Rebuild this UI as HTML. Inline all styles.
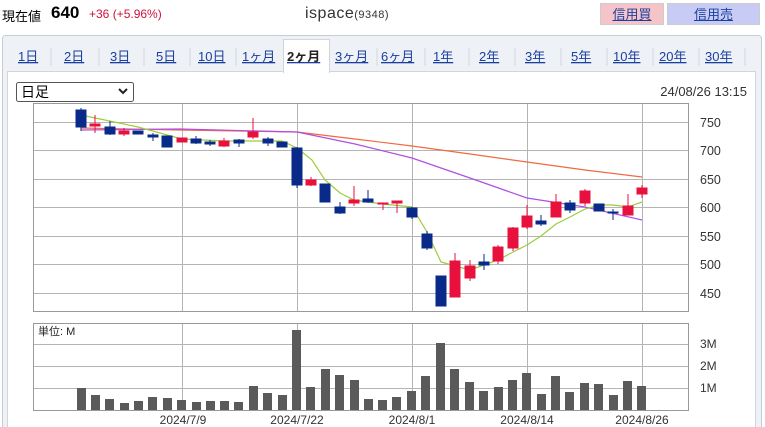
<!DOCTYPE html>
<html><head><meta charset="utf-8"><style>
body{margin:0;width:765px;height:427px;overflow:hidden;background:#fff;font-family:"Liberation Sans","Noto Sans CJK JP",sans-serif;position:relative}
.a{position:absolute;white-space:nowrap}
.btn{position:absolute;top:3px;height:22px;line-height:22px;text-align:center;font-size:13px;color:#1a3fa0;text-decoration:underline;box-sizing:border-box;border:1px solid #ccc}
.tab{position:absolute;top:46px;font-size:13px;color:#1a3fa0;text-decoration:underline}
</style></head><body>
<div class="a" style="left:2px;top:6px;font-size:13px">現在値</div>
<div class="a" style="left:51px;top:3px;font-size:17px;font-weight:bold">640</div>
<div class="a" style="left:89px;top:7px;font-size:12px;color:#d0103a">+36 (+5.96%)</div>
<div class="a" style="left:305px;top:5px;font-size:16px;color:#333;letter-spacing:0.5px">ispace<span style="font-size:11px">(9348)</span></div>
<div class="btn" style="left:600px;width:64px;background:#f5c4c8">信用買</div>
<div class="btn" style="left:667px;width:93px;background:#c8ccf5">信用売</div>
<svg class="a" style="left:0;top:0" width="765" height="427" xmlns="http://www.w3.org/2000/svg" font-family="Liberation Sans, Noto Sans CJK JP, sans-serif">
<rect x="2.5" y="35.5" width="759" height="400" rx="3" fill="#eef1f6" stroke="#c8ccd4"/>
<rect x="7.5" y="71.5" width="748" height="360" fill="#fff" stroke="#d0d4dc"/>
<rect x="283.5" y="39.5" width="46" height="33" fill="#fff" stroke="#d0d4dc"/>
<rect x="284" y="70" width="45" height="4" fill="#fff"/>
<g stroke="#d4d8e0"><line x1="51" y1="48" x2="51" y2="66"/><line x1="99" y1="48" x2="99" y2="66"/><line x1="144" y1="48" x2="144" y2="66"/><line x1="190" y1="48" x2="190" y2="66"/><line x1="236" y1="48" x2="236" y2="66"/><line x1="377" y1="48" x2="377" y2="66"/><line x1="425" y1="48" x2="425" y2="66"/><line x1="469" y1="48" x2="469" y2="66"/><line x1="515" y1="48" x2="515" y2="66"/><line x1="561" y1="48" x2="561" y2="66"/><line x1="607" y1="48" x2="607" y2="66"/><line x1="653" y1="48" x2="653" y2="66"/><line x1="699" y1="48" x2="699" y2="66"/><line x1="745" y1="48" x2="745" y2="66"/></g>
<g font-size="13" fill="#1a3fa0" text-decoration="underline">
<text x="18" y="61">1日</text><text x="64" y="61">2日</text><text x="110" y="61">3日</text><text x="156" y="61">5日</text><text x="198" y="61">10日</text><text x="242" y="61">1ヶ月</text><text x="287" y="61" fill="#222" font-weight="bold" text-decoration="none">2ヶ月</text><text x="335" y="61">3ヶ月</text><text x="381" y="61">6ヶ月</text><text x="433" y="61">1年</text><text x="479" y="61">2年</text><text x="525" y="61">3年</text><text x="571" y="61">5年</text><text x="613" y="61">10年</text><text x="659" y="61">20年</text><text x="705" y="61">30年</text></g>
<rect x="16.5" y="82.5" width="117" height="19" rx="2" fill="#fff" stroke="#555"/>
<text x="21" y="97" font-size="14">日足</text>
<path d="M119 89l4 4 4-4" stroke="#222" stroke-width="2" fill="none"/>
<text x="747" y="96" font-size="13" fill="#333" text-anchor="end">24/08/26 13:15</text>
<!-- price chart -->
<g stroke="#b4b4b4" stroke-width="1">
<line x1="33" y1="122.5" x2="688" y2="122.5"/><line x1="33" y1="150.5" x2="688" y2="150.5"/><line x1="33" y1="179.5" x2="688" y2="179.5"/><line x1="33" y1="207.5" x2="688" y2="207.5"/><line x1="33" y1="236.5" x2="688" y2="236.5"/><line x1="33" y1="264.5" x2="688" y2="264.5"/><line x1="33" y1="293.5" x2="688" y2="293.5"/>
<line x1="182.5" y1="103" x2="182.5" y2="311"/><line x1="297.5" y1="103" x2="297.5" y2="311"/><line x1="412.5" y1="103" x2="412.5" y2="311"/><line x1="527.5" y1="103" x2="527.5" y2="311"/><line x1="642.5" y1="103" x2="642.5" y2="311"/>
</g>
<rect x="33.5" y="103.5" width="655" height="208" fill="none" stroke="#999"/>
<g font-size="12.5" fill="#333"><text x="700" y="127">750</text><text x="700" y="155">700</text><text x="700" y="184">650</text><text x="700" y="212">600</text><text x="700" y="241">550</text><text x="700" y="269">500</text><text x="700" y="298">450</text></g>
<g fill="none" stroke-width="1.2">
<polyline stroke="#f06a40" points="81,128 180,130 297,132 355,139 412,146 470,154 527,162 585,170 642,177"/>
<polyline stroke="#b050e0" points="81,130 180,129 297,132 355,144 412,158 470,178 527,198 585,207 642,220"/>
<polyline stroke="#9ccc3c" points="81,115 138,127 182,139 224,141 253,141 282,141 297,148 312,160 325,180 340,193 354,200 383,204 412,207 427,232 441,262 455,266 470,270 484,265 498,260 513,252 527,245 541,236 556,224 570,217 585,209 599,205 613,205 628,207 642,202"/>
</g>
<g stroke-width="1">
<!-- x, top, bottom, wickTop, wickBottom, color -->
<g stroke="#0a2a8a" fill="#0a2a8a">
<line x1="81" y1="108" x2="81" y2="131"/><rect x="76" y="110" width="10" height="17"/>
<line x1="110" y1="121" x2="110" y2="135"/><rect x="105" y="127" width="10" height="7"/>
<rect x="133" y="131" width="10" height="3"/>
<line x1="153" y1="133" x2="153" y2="141"/><rect x="148" y="135" width="10" height="2"/>
<rect x="162" y="136" width="10" height="11"/>
<line x1="196" y1="136" x2="196" y2="144"/><rect x="191" y="139" width="10" height="4"/>
<line x1="210" y1="140" x2="210" y2="146"/><rect x="205" y="142" width="10" height="2"/>
<line x1="239" y1="139" x2="239" y2="147"/><rect x="234" y="140" width="10" height="3"/>
<line x1="268" y1="137" x2="268" y2="146"/><rect x="263" y="139" width="10" height="4"/>
<rect x="277" y="142" width="10" height="5"/>
<line x1="297" y1="147" x2="297" y2="188"/><rect x="292" y="148" width="10" height="37"/>
<rect x="320" y="184" width="10" height="18"/>
<line x1="340" y1="202" x2="340" y2="214"/><rect x="335" y="207" width="10" height="6"/>
<line x1="368" y1="190" x2="368" y2="203"/><rect x="363" y="199" width="10" height="3"/>
<line x1="412" y1="207" x2="412" y2="219"/><rect x="407" y="208" width="10" height="9"/>
<line x1="427" y1="231" x2="427" y2="250"/><rect x="422" y="234" width="10" height="14"/>
<rect x="436" y="276" width="10" height="30"/>
<line x1="484" y1="254" x2="484" y2="270"/><rect x="479" y="262" width="10" height="3"/>
<line x1="541" y1="215" x2="541" y2="226"/><rect x="536" y="221" width="10" height="3"/>
<line x1="570" y1="200" x2="570" y2="213"/><rect x="565" y="203" width="10" height="7"/>
<rect x="594" y="204" width="10" height="7"/>
<line x1="613" y1="209" x2="613" y2="220"/><rect x="608" y="212" width="10" height="1"/>
</g>
<g stroke="#e8103c" fill="#e8103c">
<line x1="95" y1="115" x2="95" y2="133"/><rect x="90" y="124" width="10" height="2"/>
<line x1="124" y1="128" x2="124" y2="136"/><rect x="119" y="131" width="10" height="3"/>
<rect x="177" y="138" width="10" height="4"/>
<line x1="224" y1="138" x2="224" y2="147"/><rect x="219" y="141" width="10" height="5"/>
<line x1="253" y1="118" x2="253" y2="139"/><rect x="248" y="132" width="10" height="5"/>
<line x1="311" y1="177" x2="311" y2="186"/><rect x="306" y="180" width="10" height="5"/>
<line x1="354" y1="186" x2="354" y2="206"/><rect x="349" y="200" width="10" height="3"/>
<line x1="383" y1="203" x2="383" y2="210"/><rect x="378" y="203" width="10" height="1"/>
<line x1="397" y1="201" x2="397" y2="213"/><rect x="392" y="201" width="10" height="2"/>
<line x1="455" y1="253" x2="455" y2="297"/><rect x="450" y="261" width="10" height="36"/>
<line x1="470" y1="260" x2="470" y2="281"/><rect x="465" y="266" width="10" height="12"/>
<line x1="498" y1="245" x2="498" y2="264"/><rect x="493" y="247" width="10" height="14"/>
<line x1="513" y1="227" x2="513" y2="251"/><rect x="508" y="228" width="10" height="20"/>
<line x1="527" y1="205" x2="527" y2="229"/><rect x="522" y="216" width="10" height="11"/>
<line x1="556" y1="194" x2="556" y2="217"/><rect x="551" y="202" width="10" height="15"/>
<line x1="585" y1="189" x2="585" y2="206"/><rect x="580" y="191" width="10" height="12"/>
<line x1="628" y1="194" x2="628" y2="215"/><rect x="623" y="206" width="10" height="9"/>
<line x1="642" y1="185" x2="642" y2="198"/><rect x="637" y="188" width="10" height="6"/>
</g></g>
<!-- volume -->
<g stroke="#b4b4b4"><line x1="33" y1="344.5" x2="688" y2="344.5"/><line x1="33" y1="366.5" x2="688" y2="366.5"/><line x1="33" y1="388.5" x2="688" y2="388.5"/>
<line x1="182.5" y1="323" x2="182.5" y2="410"/><line x1="297.5" y1="323" x2="297.5" y2="410"/><line x1="412.5" y1="323" x2="412.5" y2="410"/><line x1="527.5" y1="323" x2="527.5" y2="410"/><line x1="642.5" y1="323" x2="642.5" y2="410"/></g>
<rect x="33.5" y="323.5" width="655" height="87" fill="none" stroke="#999"/>
<text x="38" y="335" font-size="11" fill="#222">単位: M</text>
<g font-size="12" fill="#333"><text x="700" y="348">3M</text><text x="700" y="370">2M</text><text x="700" y="392">1M</text></g>
<g fill="#5a5a5a">
<rect x="77" y="388" width="9" height="22"/><rect x="91" y="395" width="9" height="15"/><rect x="105" y="399" width="9" height="11"/><rect x="120" y="403" width="9" height="7"/><rect x="134" y="401" width="9" height="9"/><rect x="148" y="397" width="9" height="13"/><rect x="163" y="398" width="9" height="12"/><rect x="177" y="400" width="9" height="10"/><rect x="192" y="402" width="9" height="8"/><rect x="206" y="401" width="9" height="9"/><rect x="220" y="401" width="9" height="9"/><rect x="234" y="402" width="9" height="8"/><rect x="249" y="386" width="9" height="24"/><rect x="263" y="393" width="9" height="17"/><rect x="278" y="395" width="9" height="15"/><rect x="292" y="330" width="9" height="80"/><rect x="306" y="387" width="9" height="23"/><rect x="321" y="369" width="9" height="41"/><rect x="335" y="375" width="9" height="35"/><rect x="350" y="380" width="9" height="30"/><rect x="364" y="399" width="9" height="11"/><rect x="378" y="400" width="9" height="10"/><rect x="392" y="397" width="9" height="13"/><rect x="407" y="391" width="9" height="19"/><rect x="421" y="376" width="9" height="34"/><rect x="436" y="343" width="9" height="67"/><rect x="450" y="369" width="9" height="41"/><rect x="465" y="382" width="9" height="28"/><rect x="479" y="391" width="9" height="19"/><rect x="494" y="387" width="9" height="23"/><rect x="508" y="380" width="9" height="30"/><rect x="522" y="373" width="9" height="37"/><rect x="537" y="394" width="9" height="16"/><rect x="551" y="376" width="9" height="34"/><rect x="565" y="392" width="9" height="18"/><rect x="580" y="383" width="9" height="27"/><rect x="594" y="384" width="9" height="26"/><rect x="609" y="395" width="9" height="15"/><rect x="623" y="381" width="9" height="29"/><rect x="637" y="386" width="9" height="24"/>
</g>
<g font-size="12" fill="#333" text-anchor="middle"><text x="183" y="424">2024/7/9</text><text x="297" y="424">2024/7/22</text><text x="412" y="424">2024/8/1</text><text x="527" y="424">2024/8/14</text><text x="642" y="424">2024/8/26</text></g>
</svg>
</body></html>
